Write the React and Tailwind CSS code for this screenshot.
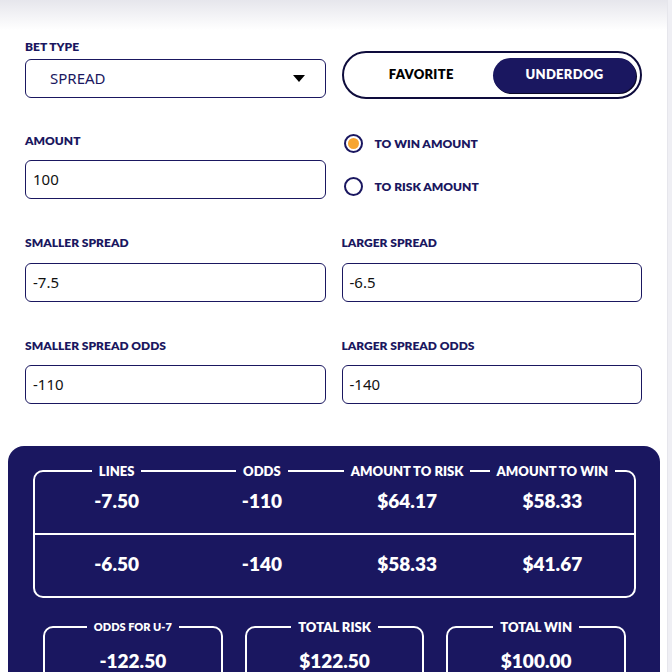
import React from "react";

const NAVY = "bg-[#1a1760]";

function Label({ children }) {
  return (
    <div className="text-[12px] leading-[14px] font-extrabold text-[#1a1760]">
      {children}
    </div>
  );
}

function Input({ value }) {
  return (
    <div className="h-[39px] border border-[#1a1760] rounded-[6px] flex items-center pl-[7px] text-[15px] text-[#111] font-['Noto_Sans',sans-serif]">
      {value}
    </div>
  );
}

function Radio({ checked, label }) {
  return (
    <div className="flex items-center gap-[12px] h-[19px]">
      <div className="w-[19px] h-[19px] rounded-full border-2 border-[#1a1760] p-[2px] flex">
        {checked && <div className="flex-1 rounded-full bg-[#f7a531]" />}
      </div>
      <span className="text-[12px] font-extrabold text-[#1a1760]">{label}</span>
    </div>
  );
}

function Legend({ children, small }) {
  return (
    <div className="flex justify-center">
      <span
        className={`${NAVY} px-[7px] ${small ? "text-[11px]" : "text-[13px]"} leading-[16px] font-extrabold text-white`}
      >
        {children}
      </span>
    </div>
  );
}

function Val({ children }) {
  return <div className="text-center text-[19px] leading-[24px] font-extrabold text-white">{children}</div>;
}

function SmallBox({ legend, value, small }) {
  return (
    <div className="border-2 border-white rounded-[10px] h-[80px]">
      <div className="-mt-[9px]">
        <Legend small={small}>{legend}</Legend>
      </div>
      <div className="mt-[14px]">
        <Val>{value}</Val>
      </div>
    </div>
  );
}

export default function App() {
  return (
    <div className="min-h-screen flex bg-[#efeff4] font-['Lato',sans-serif] overflow-hidden">
      <div className="w-[667px] bg-white">
        <div className="h-[30px] bg-gradient-to-b from-[#e6e6ec] to-white" />
        <div className="pl-[25px] pr-[25px] pt-[10px]">
          {/* row 1 */}
          <div className="grid grid-cols-2 gap-x-[16px]">
            <div>
              <Label>BET TYPE</Label>
              <div className="mt-[5px] h-[39px] border border-[#1a1760] rounded-[6px] flex items-center justify-between pl-[24px] pr-[20px]">
                <span className="text-[15px] text-[#1a1760] font-['Noto_Sans',sans-serif]">SPREAD</span>
                <svg width="12" height="7" viewBox="0 0 12 7" className="-mt-[1px]">
                  <polygon points="0,0 12,0 6,7" fill="#000" />
                </svg>
              </div>
            </div>
            <div className="mt-[11px] h-[48px] rounded-full border-2 border-[#0e0c3c] flex items-center pl-[6px] pr-[4px]">
              <div className="flex-1 text-center text-[13px] font-extrabold text-black tracking-[0.3px] -mt-[1px]">FAVORITE</div>
              <div className={`w-[143px] h-[35px] rounded-full ${NAVY} flex items-center justify-center text-[13px] font-extrabold text-white tracking-[0.3px] shadow-[1px_1px_0_#0a0828]`}>
                UNDERDOG
              </div>
            </div>
          </div>
          {/* row 2 */}
          <div className="grid grid-cols-2 gap-x-[16px] mt-[35px]">
            <div>
              <Label>AMOUNT</Label>
              <div className="mt-[12px]">
                <Input value="100" />
              </div>
            </div>
            <div className="pl-[2px]">
              <Radio checked label="TO WIN AMOUNT" />
              <div className="mt-[24px]">
                <Radio label="TO RISK AMOUNT" />
              </div>
            </div>
          </div>
          {/* row 3 */}
          <div className="grid grid-cols-2 gap-x-[16px] mt-[37px]">
            <div>
              <Label>SMALLER SPREAD</Label>
              <div className="mt-[13px]">
                <Input value="-7.5" />
              </div>
            </div>
            <div>
              <Label>LARGER SPREAD</Label>
              <div className="mt-[13px]">
                <Input value="-6.5" />
              </div>
            </div>
          </div>
          {/* row 4 */}
          <div className="grid grid-cols-2 gap-x-[16px] mt-[37px]">
            <div>
              <Label>SMALLER SPREAD ODDS</Label>
              <div className="mt-[12px]">
                <Input value="-110" />
              </div>
            </div>
            <div>
              <Label>LARGER SPREAD ODDS</Label>
              <div className="mt-[12px]">
                <Input value="-140" />
              </div>
            </div>
          </div>
        </div>
        {/* results panel */}
        <div className={`mt-[42px] ml-[8px] mr-[7px] ${NAVY} rounded-[16px] pt-[24px] pl-[25px] pr-[24px] pb-[40px]`}>
          <div className="border-2 border-white rounded-[10px]">
            <div className="-mt-[9px] grid grid-cols-4 px-[9px]">
              <Legend>LINES</Legend>
              <Legend>ODDS</Legend>
              <Legend>AMOUNT TO RISK</Legend>
              <Legend>AMOUNT TO WIN</Legend>
            </div>
            <div className="grid grid-cols-4 px-[9px] mt-[10px] pb-[20px]">
              <Val>-7.50</Val>
              <Val>-110</Val>
              <Val>$64.17</Val>
              <Val>$58.33</Val>
            </div>
            <div className="grid grid-cols-4 px-[9px] border-t-2 border-white pt-[17px] pb-[20px]">
              <Val>-6.50</Val>
              <Val>-140</Val>
              <Val>$58.33</Val>
              <Val>$41.67</Val>
            </div>
          </div>
          <div className="grid grid-cols-3 gap-x-[22px] px-[10px] mt-[28px]">
            <SmallBox small legend="ODDS FOR U-7" value="-122.50" />
            <SmallBox legend="TOTAL RISK" value="$122.50" />
            <SmallBox legend="TOTAL WIN" value="$100.00" />
          </div>
        </div>
      </div>
      <div className="flex-1 border-l border-[#e6e6ec]" />
    </div>
  );
}
